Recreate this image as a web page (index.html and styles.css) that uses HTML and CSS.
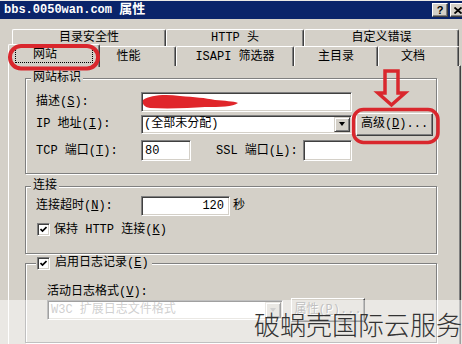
FILE: index.html
```html
<!DOCTYPE html>
<html lang="zh-CN">
<head>
<meta charset="utf-8">
<title>bbs.0050wan.com 属性</title>
<link rel="stylesheet" href="styles.css">
</head>
<body>
<div class="window">
  <div class="titlebar">
    <div class="title"><span>bbs.0050wan.com</span> <span class="title-cjk">属性</span></div>
    <div class="caption-btns">
      <div class="cap-btn">?</div>
      <div class="cap-btn"><svg width="8" height="7" viewBox="0 0 8 7"><path d="M0.5 0.5 L7.5 6.5 M7.5 0.5 L0.5 6.5" stroke="#000" stroke-width="1.8" fill="none"/></svg></div>
    </div>
  </div>

  <div class="client">
    <div class="tabrow row-back">
      <div class="tab">目录安全性</div>
      <div class="tab">HTTP 头</div>
      <div class="tab">自定义错误</div>
    </div>
    <div class="tabrow row-front">
      <div class="tab active"><span class="focus">网站</span></div>
      <div class="tab t-perf">性能</div>
      <div class="tab">ISAPI 筛选器</div>
      <div class="tab">主目录</div>
      <div class="tab t-doc">文档</div>
    </div>

    <div class="panel">
      <fieldset class="group">
        <legend>网站标识</legend>
        <div class="ident-grid">
          <span class="lbl a-l1">描述(<u>S</u>):</span>
          <div class="field wide a-f1"></div>
          <span class="lbl a-l2">IP 地址(<u>I</u>):</span>
          <div class="combo wide a-f2"><span class="combo-text">(全部未分配)</span><span class="drop"></span></div>
          <div class="btn adv a-btn">高级(<u>D</u>)...</div>
          <span class="lbl r3 a-l3">TCP 端口(<u>T</u>):</span>
          <div class="port-row r3 a-p3">
            <div class="field port">80</div>
            <span class="lbl ssl">SSL 端口(<u>L</u>):</span>
            <div class="field port port-ssl"></div>
          </div>
        </div>
      </fieldset>

      <fieldset class="group g-conn">
        <legend>连接</legend>
        <div class="conn-body">
          <div class="conn-row">
            <span class="lbl lbl-w">连接超时(<u>N</u>):</span>
            <div class="field timeout">120</div>
            <span class="unit">秒</span>
          </div>
          <div class="check-row">
            <span class="check"><svg width="7" height="7" viewBox="0 0 7 7"><path d="M0.5 3 L2.5 5 L6.5 1" stroke="#000" stroke-width="1.7" fill="none"/></svg></span>
            <span>保持 HTTP 连接(<u>K</u>)</span>
          </div>
        </div>
      </fieldset>

      <fieldset class="group g-log">
        <legend class="check-legend"><span class="legend-inner"><span class="check"><svg width="7" height="7" viewBox="0 0 7 7"><path d="M0.5 3 L2.5 5 L6.5 1" stroke="#000" stroke-width="1.7" fill="none"/></svg></span><span>启用日志记录(<u>E</u>)</span></span></legend>
        <div class="log-body">
          <div class="lbl">活动日志格式(<u>V</u>):</div>
          <div class="log-row">
            <div class="combo disabled log-combo"><span class="combo-text">W3C 扩展日志文件格式</span><span class="drop"></span></div>
            <div class="btn disabled prop">属性(<u>P</u>)...</div>
          </div>
        </div>
      </fieldset>
    </div>
  </div>

  <svg class="marks" width="462" height="344" viewBox="0 0 462 344">
    <rect x="10" y="45" width="88" height="22.5" rx="11" ry="11" fill="none" stroke="#d9272d" stroke-width="4"/>
    <rect x="353.5" y="108.5" width="84.5" height="33" rx="10" ry="10" fill="none" stroke="#d9272d" stroke-width="3.5"/>
    <path d="M385 70 H398 V92 H405 L391.5 104 L378 92 H385 Z" fill="none" stroke="#d9272d" stroke-width="3.5" stroke-linejoin="miter"/>
    <path d="M143 99 C150 94 165 93 180 95 C195 96 205 97 215 99 C225 100 233 100 238 102 C233 106 220 106 205 106 C190 107 170 108 150 107 C144 106 142 103 143 99 Z" fill="#e0262b"/>
  </svg>

  <div class="watermark">破蜗壳国际云服务</div>
</div>
</body>
</html>
```

FILE: styles.css
```css
* { box-sizing: border-box; }
html, body { margin: 0; padding: 0; }
body {
  width: 462px;
  height: 344px;
  overflow: hidden;
  background: #d4d0c8;
  font-family: "Liberation Mono", "Noto Sans CJK SC", monospace;
  font-size: 12px;
  line-height: 14px;
  color: #000;
}
u { text-decoration: underline; text-underline-offset: 1px; }

.window {
  position: relative;
  width: 462px;
  height: 344px;
  overflow: hidden;
  background: #d4d0c8;
  border-top: 1px solid #ebe9e5;
}

/* title bar */
.titlebar {
  height: 18px;
  background: #0a246a;
  color: #fff;
  display: flex;
  align-items: center;
  justify-content: space-between;
  padding-left: 4px;
}
.title { font-weight: bold; white-space: nowrap; }
.title-cjk { font-size: 13px; }
.caption-btns { display: flex; gap: 2px; margin-right: -4px; }
.cap-btn {
  width: 16px;
  height: 14px;
  background: #d4d0c8;
  border: 1px solid;
  border-color: #fff #404040 #404040 #fff;
  box-shadow: inset -1px -1px 0 #808080;
  display: flex;
  align-items: center;
  justify-content: center;
  color: #000;
  font: bold 11px/1 "Liberation Sans", sans-serif;
}

/* tabs */
.client { padding: 10px 0 0 8px; }
.tabrow { display: grid; }
.row-back { grid-template-columns: 154px 138px 155px; height: 17px; margin-left: 4px; }
.row-front { grid-template-columns: 88px 78px 118px 84px 81px; height: 19px; margin-left: 2px; }
.tab {
  display: flex;
  align-items: center;
  justify-content: center;
  white-space: nowrap;
  background: #d4d0c8;
  border-top: 1px solid #fff;
  border-left: 1px solid #fff;
  border-right: 1px solid #404040;
  box-shadow: inset -1px 0 0 #808080;
  border-radius: 2px 2px 0 0;
}
.t-perf { padding-right: 17px; }
.t-doc { padding-right: 11px; }
.tab.active {
  position: relative;
  z-index: 2;
  margin: -2px -2px -1px -2px;
  padding: 2px 6px 4px 6px;
  align-items: stretch;
}
.focus {
  flex: 1;
  display: flex;
  align-items: center;
  justify-content: center;
  padding-right: 18px;
  border: 1px dotted #000;
}

/* panel */
.panel {
  margin-right: 1px;
  height: 300px;
  border-left: 1px solid #fff;
  border-top: 1px solid #fff;
  border-right: 1px solid #404040;
  box-shadow: inset -1px 0 0 #808080;
  padding: 5px 23px 0 16px;
}

.group {
  margin: 0;
  padding: 0;
  min-width: 0;
  border: 1px solid #808080;
  box-shadow: 1px 1px 0 #fff, inset 1px 1px 0 #fff;
}
.group legend {
  margin-left: 5px;
  padding: 0 2px;
  line-height: 14px;
  background: #d4d0c8;
}
.g-conn { margin-top: 5px; }
.g-log { margin-top: 2px; }

/* controls */
.field, .combo {
  background: #fff;
  border: 1px solid;
  border-color: #808080 #fff #fff #808080;
  box-shadow: inset 1px 1px 0 #404040, inset -1px -1px 0 #d4d0c8;
}
.field { height: 20px; padding: 0 3px; display: flex; align-items: center; }
.combo { height: 19px; display: flex; align-items: center; padding-left: 2px; }
.combo-text { flex: 1; white-space: nowrap; }
.drop {
  width: 16px;
  align-self: stretch;
  margin: 1px;
  background: #d4d0c8;
  border: 1px solid;
  border-color: #d4d0c8 #404040 #404040 #d4d0c8;
  box-shadow: inset 1px 1px 0 #fff, inset -1px -1px 0 #808080;
  display: flex;
  align-items: center;
  justify-content: center;
}
.drop::before {
  content: "";
  border-left: 3.5px solid transparent;
  border-right: 3.5px solid transparent;
  border-top: 4px solid #000;
}
.btn {
  display: flex;
  align-items: center;
  justify-content: center;
  white-space: nowrap;
  background: #d4d0c8;
  border: 1px solid;
  border-color: #fff #404040 #404040 #fff;
  box-shadow: inset -1px -1px 0 #808080;
}
.disabled.btn { color: #808080; text-shadow: 1px 1px 0 #fff; }
.disabled .combo-text { color: #a0a0a0; }
.disabled .drop::before { border-top-color: #a0a0a0; }

.check {
  width: 13px;
  height: 13px;
  flex: none;
  background: #fff;
  border: 1px solid;
  border-color: #808080 #fff #fff #808080;
  box-shadow: inset 1px 1px 0 #404040, inset -1px -1px 0 #d4d0c8;
  display: flex;
  align-items: center;
  justify-content: center;
}

/* group 1 */
.ident-grid {
  display: grid;
  grid-template-columns: 105px 211px 81px;
  grid-template-rows: 20px 24px 25px;
  grid-template-areas:
    "l1 f1 ."
    "l2 f2 btn"
    "l3 p3 p3";
  align-items: center;
  padding: 7px 0 12px 10px;
}
.a-l1 { grid-area: l1; }
.a-f1 { grid-area: f1; }
.a-l2 { grid-area: l2; }
.a-f2 { grid-area: f2; }
.a-btn { grid-area: btn; }
.a-l3 { grid-area: l3; }
.a-p3 { grid-area: p3; }
.lbl { white-space: nowrap; }
.wide { width: 211px; }
.adv { width: 77px; height: 23px; margin-left: 4px; }
.r3 { margin-top: 4px; }
.port-row { display: flex; align-items: center; width: 211px; height: 21px; }
.port { width: 50px; height: 21px; }
.ssl { margin-left: 25px; }
.port-ssl { width: 49px; margin-left: auto; }

/* group 2 */
.conn-body { padding: 3px 0 17px 10px; }
.conn-row { display: flex; align-items: center; height: 20px; }
.lbl-w { width: 105px; }
.timeout { width: 89px; justify-content: flex-end; padding-right: 5px; }
.unit { margin-left: 3px; }
.check-row { display: flex; align-items: center; gap: 4px; margin-top: 7px; padding-left: 1px; height: 13px; }

/* group 3 */
.group legend.check-legend { margin-left: 10px; padding: 0 3px 0 1px; }
.legend-inner { display: flex; align-items: center; gap: 5px; height: 14px; }
.log-body { padding: 15px 0 20px 21px; }
.log-row { display: flex; align-items: center; height: 24px; margin-top: -1px; }
.log-combo { width: 236px; height: 20px; padding-left: 3px; }
.prop { width: 74px; height: 24px; margin-left: 8px; }

/* annotations & watermark */
.marks { position: absolute; left: 0; top: 0; z-index: 4; }
.watermark {
  position: absolute;
  left: 0;
  right: 0;
  top: 299px;
  bottom: 0;
  z-index: 5;
  background: rgba(255, 255, 255, 0.5);
  padding-top: 11px;
  text-align: right;
  font-family: "Noto Sans CJK SC", sans-serif;
  font-weight: 300;
  font-size: 26px;
  line-height: 26px;
  color: #333;
  white-space: nowrap;
}
```
